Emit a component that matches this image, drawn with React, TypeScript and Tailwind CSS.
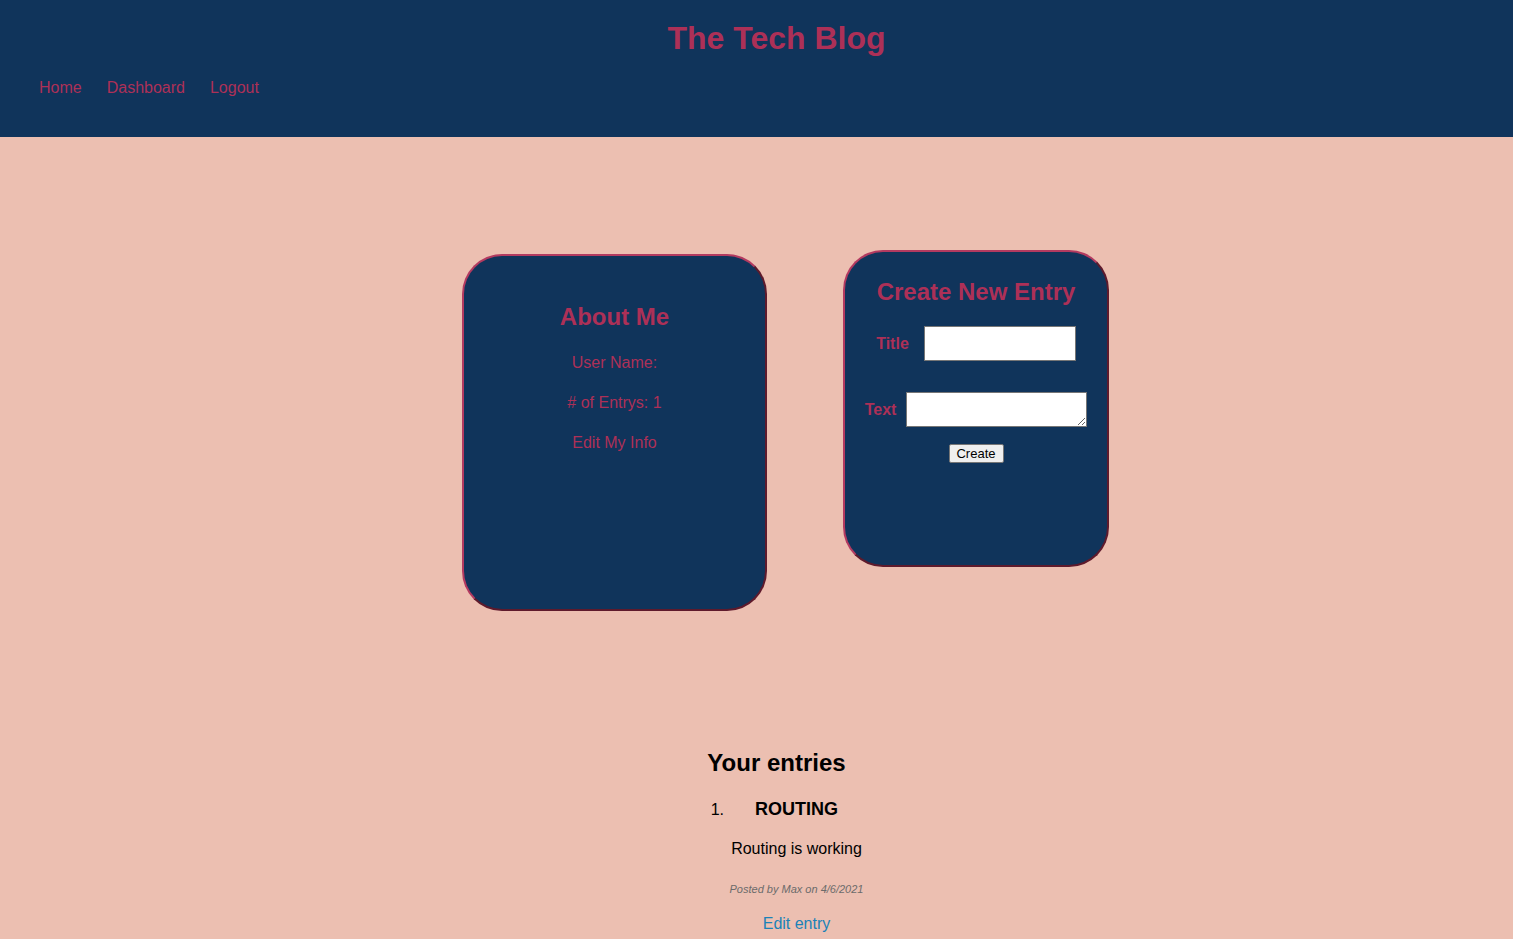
export default function App() {
  return (
    <div className="min-h-screen bg-[#ecbfb1] font-['Liberation_Sans',Arial,sans-serif] text-black">
      <header className="h-[137px] bg-[#10345b] pt-[20px]">
        <h1 className="pl-10 text-center text-[32px] font-bold leading-[37px] text-[#ad3057]">
          The Tech Blog
        </h1>
        <nav className="mt-[22px] flex gap-[25px] pl-[39px] text-base leading-[18px] text-[#ad3057]">
          <a href="#">Home</a>
          <a href="#">Dashboard</a>
          <a href="#">Logout</a>
        </nav>
      </header>

      <main className="flex items-start justify-center gap-[76px] pl-[58px] pt-[113px]">
        <section className="mt-1 h-[357px] w-[305px] rounded-[40px] border-2 border-t-[#b33a60] border-l-[#b33a60] border-r-[#5e1a2c] border-b-[#5e1a2c] bg-[#10345b] pt-[47px] text-center text-[#ad3057]">
          <h2 className="text-2xl font-bold leading-7">About Me</h2>
          <p className="mt-[23px] text-base leading-[18px]">User Name:</p>
          <p className="mt-[22px] text-base leading-[18px]">
            # of Entrys: 1
          </p>
          <p className="mt-[22px] text-base leading-[18px]">
            <a href="#">Edit My Info</a>
          </p>
        </section>

        <section className="h-[317px] w-[266px] rounded-[40px] border-2 border-t-[#b33a60] border-l-[#b33a60] border-r-[#5e1a2c] border-b-[#5e1a2c] bg-[#10345b] pt-[26px] text-center text-[#ad3057]">
          <h2 className="text-2xl font-bold leading-7">Create New Entry</h2>
          <form className="flex flex-col items-center">
            <div className="mt-[20px] flex items-center gap-[15px]">
              <label className="text-base font-bold">Title</label>
              <input
                type="text"
                className="h-[35px] w-[152px] border border-[#767676] bg-white px-1 text-black"
              />
            </div>
            <div className="mt-[31px] flex items-center gap-[10px]">
              <label className="text-base font-bold">Text</label>
              <textarea className="h-[35px] w-[181px] resize border border-[#767676] bg-white px-1 text-black" />
            </div>
            <button
              type="button"
              className="mt-[17px] h-[19px] w-[55px] rounded-[2px] border border-[#767676] bg-[#efefef] text-[13px] leading-[15px] text-black"
            >
              Create
            </button>
          </form>
        </section>
      </main>

      <section className="mt-[138px] pl-10 text-center">
        <h2 className="text-2xl font-bold leading-7">Your entries</h2>
        <ol className="pl-10">
          <li>
            <h3 className="mt-[22px] text-[18px] font-bold leading-[21px]">
              <span className="relative inline-block">
                <span className="absolute right-full top-[-1px] mr-[31px] text-base font-normal">
                  1.
                </span>
                ROUTING
              </span>
            </h3>
            <p className="mt-[20px] text-base leading-[18px]">
              Routing is working
            </p>
            <p className="mt-[25px] text-[11px] italic leading-[13px] text-[#6b6b6b]">
              Posted by Max on 4/6/2021
            </p>
            <a
              href="#"
              className="mt-[19px] block text-base leading-[18px] text-[#1a82b8]"
            >
              Edit entry
            </a>
          </li>
        </ol>
      </section>
    </div>
  );
}
